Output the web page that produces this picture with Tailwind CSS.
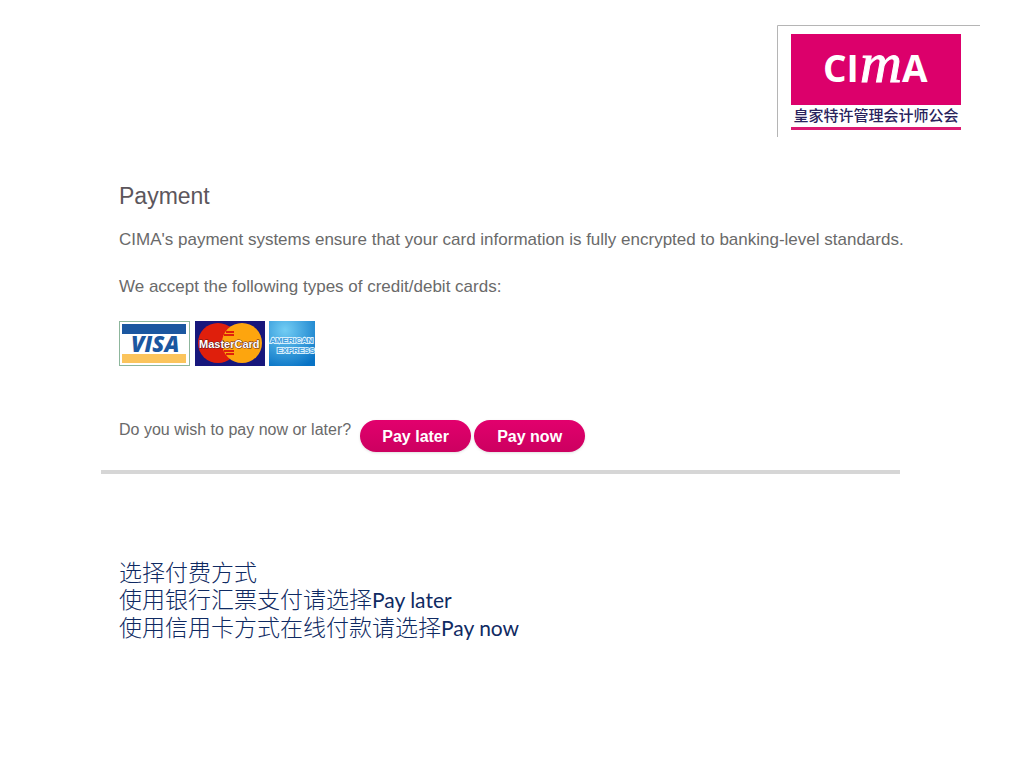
<!DOCTYPE html>
<html lang="zh-CN">
<head>
  <meta charset="UTF-8" />
  <meta name="viewport" content="width=device-width, initial-scale=1.0"/>
  <title>Payment</title>
  <script src="https://cdn.jsdelivr.net/npm/@tailwindcss/browser@4"></script>
</head>
<body class="bg-white min-h-screen font-['Liberation_Sans','Noto_Sans_CJK_SC',sans-serif] text-[#6a6a6a]">
  <header class="flex justify-end pt-[25px] pr-11">
    <!-- CIMA logo -->
    <svg class="w-[203px] h-28" viewBox="0 0 203 112" role="img" aria-label="CIMA 皇家特许管理会计师公会">
      <path d="M0.5 112V0.5H203" fill="none" stroke="#b5b5b5"/>
      <rect x="14" y="9" width="170" height="71" fill="#dc006b"/>
      <g fill="#fff" font-family="'Open Sans', sans-serif" font-weight="700" font-size="37">
        <text x="46" y="57">CI</text>
        <text x="125" y="57">A</text>
      </g>
      <text x="83" y="57" fill="#fff" stroke="#fff" stroke-width="1" font-family="'Liberation Serif', serif" font-style="italic" font-size="58">m</text>
      <text x="99" y="96" text-anchor="middle" fill="#29235c" font-family="'Noto Sans CJK SC', sans-serif" font-weight="500" font-size="15">皇家特许管理会计师公会</text>
      <rect x="14" y="102" width="170" height="3" fill="#dc1a72"/>
    </svg>
  </header>

  <main class="pl-[101px] pr-[124px] pt-[43px]">
    <section class="border-b-4 border-[#d6d6d6] pl-[18px] pb-[18px]">
      <h1 class="text-[23px] leading-8 text-[#5c565c]">Payment</h1>
      <p class="mt-4 text-[17px] leading-6 whitespace-nowrap">CIMA's payment systems ensure that your card information is fully encrypted to banking-level standards.</p>
      <p class="mt-[23px] text-[17px] leading-6">We accept the following types of credit/debit cards:</p>

      <div class="mt-[21px] flex gap-1">
        <!-- Visa -->
        <svg class="w-[72px] h-[47px]" viewBox="0 0 72 47" role="img" aria-label="Visa">
          <rect x="0.5" y="1.5" width="70" height="44" fill="#fff" stroke="#8db69c"/>
          <rect x="3" y="4" width="64" height="10" fill="#1b57a0"/>
          <rect x="3" y="34" width="64" height="9" fill="#fbc45c"/>
          <text x="12" y="32" fill="#1b57a0" font-family="'Open Sans', sans-serif" font-weight="800" font-style="italic" font-size="22">VISA</text>
        </svg>
        <!-- MasterCard -->
        <svg class="w-[70px] h-[47px]" viewBox="0 0 70 47" role="img" aria-label="MasterCard">
          <rect y="1" width="70" height="45" fill="#17177c"/>
          <circle cx="23" cy="23" r="20" fill="#df1f0c"/>
          <circle cx="47" cy="23" r="20" fill="#fda50e"/>
          <path d="M31 12h8M29 15h10M29 31h10M31 34h8" stroke="#df1f0c" stroke-width="2"/>
          <text x="4" y="28" fill="#fff" stroke="#5b1720" stroke-width="1" paint-order="stroke" font-family="'Liberation Sans', sans-serif" font-weight="700" font-size="11">MasterCard</text>
        </svg>
        <!-- American Express -->
        <svg class="w-[46px] h-[47px]" viewBox="0 0 46 47" role="img" aria-label="American Express">
          <defs>
            <radialGradient id="amex" cx="0.35" cy="0.2" r="0.9">
              <stop offset="0" stop-color="#72cdf4"/>
              <stop offset="1" stop-color="#0873c5"/>
            </radialGradient>
          </defs>
          <rect y="1" width="46" height="45" fill="url(#amex)"/>
          <g fill="#3c9bdc" stroke="#d5effc" stroke-width="2" paint-order="stroke" font-family="'Liberation Sans', sans-serif" font-weight="700" font-size="8">
            <text x="1" y="23">AMERICAN</text>
            <text x="8" y="33">EXPRESS</text>
          </g>
        </svg>
      </div>

      <div class="mt-[53px] flex items-start gap-[3px]">
        <p class="pr-[6px] text-base leading-5 whitespace-nowrap">Do you wish to pay now or later?</p>
        <button type="button" class="h-8 w-[111px] rounded-full bg-linear-to-b from-[#e2006d] to-[#cc0060] pt-[2px] text-base font-bold text-white shadow-sm">Pay later</button>
        <button type="button" class="h-8 w-[111px] rounded-full bg-linear-to-b from-[#e2006d] to-[#cc0060] pt-[2px] text-base font-bold text-white shadow-sm">Pay now</button>
      </div>
    </section>

    <section class="mt-[84px] pl-[18px] font-['Noto_Sans_CJK_SC',sans-serif] font-light text-[23px] leading-[27px] text-[#0f2a62]">
      <p>选择付费方式</p>
      <p>使用银行汇票支付请选择<span class="font-[Lato] font-normal text-[21px]">Pay later</span></p>
      <p>使用信用卡方式在线付款请选择<span class="font-[Lato] font-normal text-[21px]">Pay now</span></p>
    </section>
  </main>
</body>
</html>
